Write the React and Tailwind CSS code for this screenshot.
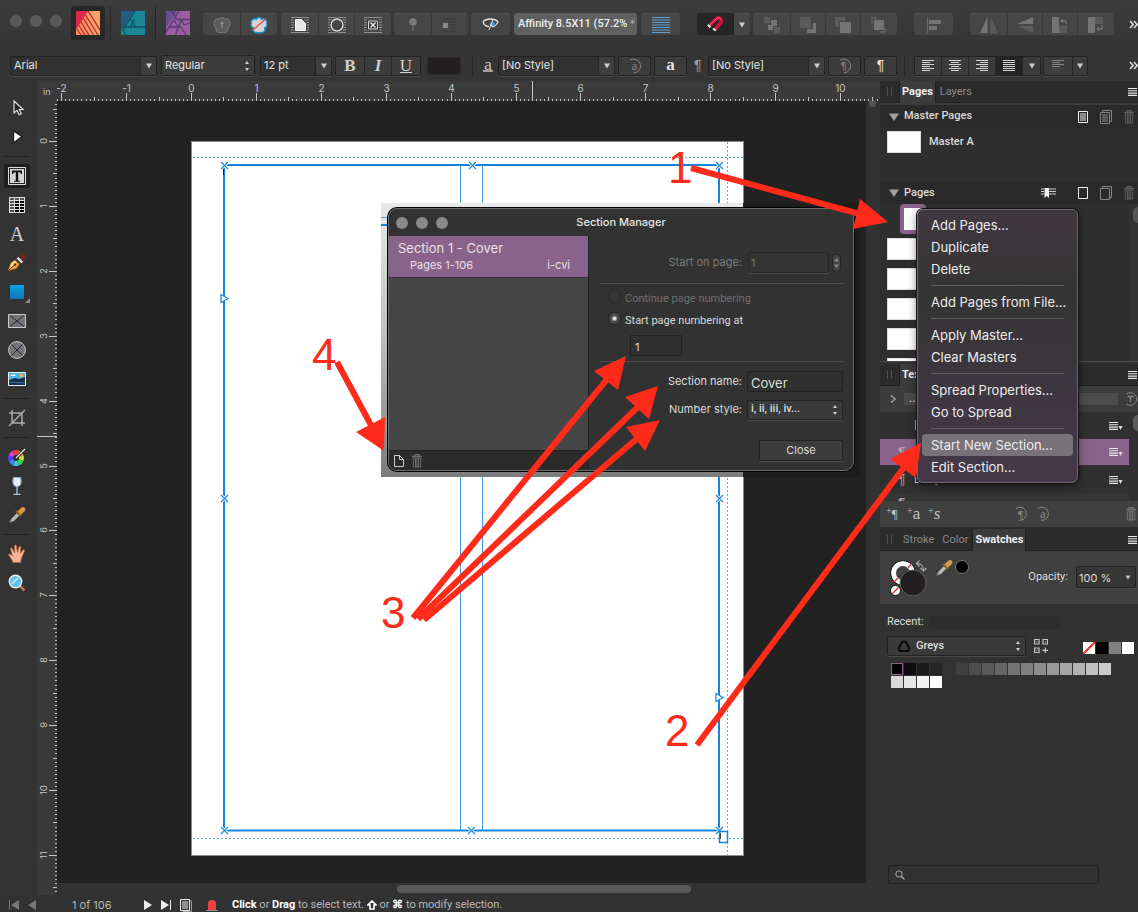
import React from "react";

const btn = "flex items-center justify-center bg-[#464646] border-t border-[#505050]";
const sep = "w-px bg-[#262626] shrink-0";
const boxed = "border border-[#222] shadow-[0_1px_0_#4a4a4a] rounded-[2px]";

function Svg({ w, h, children, className = "" }) {
  return (
    <svg width={w} height={h} viewBox={`0 0 ${w} ${h}`} fill="none" className={`shrink-0 ${className}`} aria-hidden="true">
      {children}
    </svg>
  );
}

const Down = ({ className = "text-[#d0d0d0]" }) => (
  <Svg w={8} h={6} className={className}>
    <path d="M1 .5h6L4 5.5z" fill="currentColor" />
  </Svg>
);

const UpDown = () => (
  <Svg w={6} h={12} className="text-[#d0d0d0]">
    <path d="M1 4h4L3 1zM1 8h4L3 11z" fill="currentColor" />
  </Svg>
);

const Chevrons = () => (
  <Svg w={9} h={9} className="text-[#e4e4e4]">
    <path d="M1 1l3.2 3.5L1 8M5 1l3.2 3.5L5 8" stroke="currentColor" strokeWidth="1.5" />
  </Svg>
);

const Trash = ({ className = "text-[#6a6a6a]" }) => (
  <Svg w={10} h={14} className={className}>
    <path d="M0 2.5h10M3 2V.7h4V2" stroke="currentColor" strokeWidth="1.3" />
    <path d="M1.3 4h7.4v9H1.3zM3.5 4v9M5 4v9M6.6 4v9" stroke="currentColor" strokeWidth="1" />
  </Svg>
);

const MenuLines = () => (
  <Svg w={9} h={8} className="text-[#e6e6e6]">
    <path d="M0 .5h9M0 2.8h9M0 5.1h9M0 7.4h9" stroke="currentColor" strokeWidth="1.1" />
  </Svg>
);

const Dropper = () => (
  <Svg w={18} h={18}>
    <path d="M1.5 16.5l2-4 5.5-5.5 2.5 2.5-5.5 5.5z" fill="#b9bcbc" stroke="#666" strokeWidth=".6" />
    <path d="M8 5l5 5" stroke="#8a5a1e" strokeWidth="2.4" />
    <path d="M9.5 5.5L13 2c1.5-1.5 3-1 3.8-.2s1 2.200-.5 3.700L12.600 9z" fill="#d99a45" />
  </Svg>
);

function Group({ items, className = "" }) {
  return (
    <div className={`flex h-[22px] gap-px rounded-[3px] overflow-hidden ${className}`}>
      {items.map(([label, w, icon]) => (
        <button key={label} aria-label={label} className={`${btn} ${w}`}>
          {icon}
        </button>
      ))}
    </div>
  );
}

const wrapLines = <path d="M0 1.500h18M0 4h18M0 6.500h18M0 9h18M0 11.500h18M0 14h18M0 16.500h18" stroke="#8f8f8f" />;
const flower = "M8.300 3.200a3.100 3.100 0 0 1 5.400 0 3.600 3.600 0 0 1 5 4.300 3.600 3.600 0 0 1-2 4.500 3.400 3.400 0 0 1-4.200 4.500 3.600 3.600 0 0 1-3 0A3.400 3.400 0 0 1 5.300 12a3.600 3.600 0 0 1-2-4.500 3.600 3.600 0 0 1 5-4.300z";

function TopBar() {
  return (
    <header className="flex h-[47px] shrink-0 items-start bg-gradient-to-b from-[#3d3d3d] to-[#353535] overflow-hidden">
      <div className="flex gap-2 pl-[10px] pt-[15px] w-[71px] shrink-0">
        {["Close window", "Minimise window", "Zoom window"].map((n) => (
          <button key={n} aria-label={n} className="size-3 rounded-full bg-[#595959]" />
        ))}
      </div>
      <div className="flex pt-[6px] h-10 items-stretch shrink-0">
        <button aria-label="Publisher" className="flex w-[34px] items-center justify-center rounded-[4px] bg-[#282828]">
          <Svg w={24} h={24}>
            <path d="M0 0h24v24H0z" fill="#ffa066" />
            <path d="M0 20L12 0v24H0z" fill="#ff9158" />
            <path d="M1 18l4 6M3 14.500l6 9.500M5 11l8 13M7.500 7.500L17.500 24M9.500 4L22 24M12 0l12 19" stroke="#b02a3a" strokeWidth="1.300" />
            <path d="M0 0h12L0 19z" fill="#dc2850" />
          </Svg>
        </button>
        <span className={`${sep} ml-[5px]`} />
        <button aria-label="Designer" className="flex w-11 items-center justify-center">
          <Svg w={24} h={24}>
            <path d="M0 0h24v24H0z" fill="#1c8795" />
            <path d="M0 0h13L0 20z" fill="#1f5c82" />
            <path d="M14 0L2 19l3 5M9.500 8l5 8M14 8l-5 8M2 16h22" stroke="#11506a" strokeWidth="1.300" />
          </Svg>
        </button>
        <span className={sep} />
        <button aria-label="Photo" className="flex w-11 items-center justify-center">
          <Svg w={24} h={24}>
            <path d="M0 0h24v24H0z" fill="#9a5ea0" />
            <path d="M0 0h11L0 17z" fill="#6a4c94" />
            <path d="M13 0L0 21M6 0l5 8.500h13M15.500 8.500l-6 15M3 16h12M8 9l4 7M15 16l5 8M15 9l3 5M24 12l-6 2" stroke="#573a78" strokeWidth="1.300" />
          </Svg>
        </button>
      </div>
      <div className="flex items-center pt-[13px] pl-[3px] shrink-0">
        <Group
          items={[
            ["Upload", "w-[37px]", <Svg w={22} h={18}><path d={flower} fill="#5c5c5c" stroke="#7c7c7c" /><path d="M11 4.500l3.200 4H12V13h-2V8.500H7.800z" fill="#8c8c8c" stroke="#444" strokeWidth=".5" /></Svg>],
            ["Clip", "w-9", <Svg w={22} h={18}><path d={flower} fill="#d0d4d8" stroke="#1d8fd0" strokeWidth="1.500" /><path d="M5 14L17 3.500" stroke="#ff4a3c" strokeWidth="1.500" /></Svg>],
          ]}
        />
        <Group
          className="ml-1"
          items={[
            ["Wrap page", "w-[37px]", <Svg w={18} h={18}>{wrapLines}<path d="M3 2h8l5 5v9H3z" fill="#444" /><path d="M4.500 3.500h6l4 4v7h-10z" fill="#e6e6e6" stroke="#fff" /></Svg>],
            ["Wrap circle", "w-[35px]", <Svg w={18} h={18}>{wrapLines}<circle cx="9" cy="9" r="7" fill="#464646" stroke="#333" /><circle cx="9" cy="9" r="6" stroke="#ddd" strokeWidth="1.400" /></Svg>],
            ["Wrap box", "w-9", <Svg w={18} h={18}>{wrapLines}<path d="M3 3.500h12v11H3z" fill="#333" /><path d="M4.500 5h9v8h-9z" stroke="#ddd" /><path d="M6.500 6.500l5 5M11.500 6.500l-5 5" stroke="#eee" strokeWidth="1.400" /></Svg>],
          ]}
        />
        <Group
          className="ml-[3px]"
          items={[
            ["Pin", "w-[37px]", <Svg w={10} h={14}><circle cx="5" cy="4" r="3.700" fill="#7c7c7c" /><path d="M5 7v6" stroke="#7c7c7c" /></Svg>],
            ["Inline", "w-9", <Svg w={16} h={14}><path d="M0 1h14M8 4h6M8 7h8M8 10h6M0 13h14" stroke="#3b3b3b" /><path d="M1 5h5v5H1z" fill="#8a8a8a" /></Svg>],
          ]}
        />
        <Group
          className="ml-[3px]"
          items={[["Preview", "w-[39px]", <Svg w={17} h={13}><path d="M1 4c3-4 12-4 15 0-2 3.500-4 4.500-5 4.500S9 7 9 5.500" stroke="#e2e2e2" strokeWidth="1.300" /><path d="M1 4c1 3 3 4.500 6 4.500" stroke="#e2e2e2" strokeWidth="1.300" /><path d="M11 3.500a2.600 2.600 0 0 1 0 5L9 5z" fill="#25a0e0" /><path d="M11 1L7 12" stroke="#e2e2e2" /></Svg>]]}
        />
        <button className="ml-1 flex h-[22px] w-[123px] items-center justify-between rounded-[3px] bg-[#606060] px-1 font-[Roboto,sans-serif] text-[11px] font-medium text-[#efefef] whitespace-nowrap">
          <span>Affinity 8.5X11 (57.2%</span>
          <span className="text-[#b4b4b4]">＊</span>
        </button>
        <Group
          className="ml-1"
          items={[["Baseline grid", "w-[39px]", <Svg w={18} h={16}><path d="M0 .5h18M0 3h18M0 5.500h18M0 8h18M0 10.500h18M0 13h18M0 15.500h18" stroke="#5a9fd4" /></Svg>]]}
        />
        <div className="ml-[17px] flex h-[22px] overflow-hidden rounded-[3px]">
          <button aria-label="Snapping" className="flex w-[37px] items-center justify-center bg-[#262626]">
            <Svg w={20} h={18}>
              <path d="M3 11l7-7c3-3 7 1 4.500 4l-6 7" stroke="#d3133b" strokeWidth="3.600" />
              <path d="M3.500 10.500L10 4c2-2 4.500-1 5 .5" stroke="#ff5a72" strokeWidth="1" />
              <path d="M1.800 9.800l2.600 2.600M7 13.500l2.800 2.200" stroke="#d8d8d8" strokeWidth="2.200" />
            </Svg>
          </button>
          <button aria-label="Snapping options" className={`${btn} w-4`}><Down /></button>
        </div>
        <Group
          className="ml-[3px]"
          items={[
            ["Move to back", "w-[37px]", <Svg w={18} h={16}><path d="M1 0h6v6H1zM11 10h6v6h-6z" fill="#5b5b5b" /><path d="M8 3h6v6h-4v4H5V8h3z" fill="#747474" /></Svg>],
            ["Move back one", "w-[34px]", <Svg w={18} h={16}><path d="M8 16v-4h6V6h3v10z" fill="#747474" /><path d="M1 0h11v11H1z" fill="#5b5b5b" /></Svg>],
            ["Move forward one", "w-[34px]", <Svg w={18} h={16}><path d="M1 0h10v4H5v6H1z" fill="#5b5b5b" /><path d="M6 5h11v11H6z" fill="#747474" /></Svg>],
            ["Move to front", "w-9", <Svg w={18} h={16}><path d="M1 0h6v2H3v5H1zM16 11v5h-6v-2h4v-3z" fill="#5b5b5b" /><path d="M4 3h10v10H4z" fill="#747474" /></Svg>],
          ]}
        />
        <Group
          className="ml-[17px]"
          items={[["Align", "w-[39px]", <Svg w={16} h={16}><path d="M1.500 0v16" stroke="#6a6a6a" /><path d="M3 3h12v4H3zM3 9h8v4H3z" fill="#747474" /></Svg>]]}
        />
        <Group
          className="ml-[17px]"
          items={[
            ["Flip horizontal", "w-[37px]", <Svg w={20} h={18}><path d="M8.500 1v16H1z" fill="#747474" /><path d="M11.500 1v16H19z" fill="#5b5b5b" /></Svg>],
            ["Flip vertical", "w-[34px]", <Svg w={18} h={18}><path d="M17 1v7H1z" fill="#747474" /><path d="M17 17v-7H1z" fill="#5b5b5b" /></Svg>],
            ["Rotate left", "w-[34px]", <Svg w={18} h={16}><path d="M1 0h7v16H1z" fill="#747474" /><path d="M8 9h8v7H8z" fill="#5b5b5b" /><path d="M15 7V4h-5M12 2l-2 2 2 2" stroke="#858585" /></Svg>],
            ["Rotate right", "w-9", <Svg w={18} h={16}><path d="M1 0h7v16H1z" fill="#747474" /><path d="M8 0h8v7H8z" fill="#5b5b5b" /><path d="M15 8v4h-5M12 10l-2 2 2 2" stroke="#858585" /></Svg>],
          ]}
        />
      </div>
      <button aria-label="More tools" className="ml-auto mt-5"><Chevrons /></button>
    </header>
  );
}

function Combo({ label, value, field, className = "" }) {
  return (
    <div className={`flex h-5 overflow-hidden bg-[#313131] ${boxed} ${className}`}>
      <input aria-label={label} defaultValue={value} className={`min-w-0 bg-transparent pl-[3px] text-[11px] text-[#e6e6e6] outline-none ${field}`} />
      <button aria-label={`${label} list`} className="flex w-4 items-center justify-center border-l border-[#262626] bg-[#3e3e3e]">
        <Down />
      </button>
    </div>
  );
}

const alignPaths = [
  "M0 .5h12M0 2.500h8M0 4.500h12M0 6.500h8M0 8.500h12M0 10.500h8",
  "M0 .5h12M2 2.500h8M0 4.500h12M2 6.500h8M0 8.500h12M2 10.500h8",
  "M0 .5h12M4 2.500h8M0 4.500h12M4 6.500h8M0 8.500h12M4 10.500h8",
  "M0 .5h12M0 2.500h12M0 4.500h12M0 6.500h12M0 8.500h12M0 10.500h12",
];

function ContextBar() {
  const serif = "font-['Liberation_Serif',serif]";
  const cell = "flex items-center justify-center bg-[#3c3c3c]";
  return (
    <div className="flex h-[34px] shrink-0 items-center bg-[#353535] pl-[10px] pt-[3px] overflow-hidden text-[11px] text-[#e6e6e6]">
      <Combo label="Font" value="Arial" field="w-[129px]" />
      <div className={`ml-1 flex h-[21px] w-[94px] shrink-0 items-center bg-[#3c3c3c] pr-[4px] ${boxed}`}>
        <select aria-label="Font style" className="min-w-0 flex-1 appearance-none bg-transparent pl-[3px] outline-none">
          <option>Regular</option>
        </select>
        <UpDown />
      </div>
      <Combo label="Font size" value="12 pt" field="w-[54px]" className="ml-[5px]" />
      <div className={`ml-[3px] flex h-5 shrink-0 gap-px bg-[#262626] text-[17px] text-[#d0d0d0] ${boxed} ${serif}`}>
        <button className={`${cell} w-7 font-bold`}>B</button>
        <button className={`${cell} w-[26px] font-bold italic`}>I</button>
        <button className={`${cell} w-7`}><span className="border-b border-[#d0d0d0] leading-[13px]">U</span></button>
      </div>
      <button aria-label="Text colour" className="ml-[6px] h-[18px] w-[34px] shrink-0 border border-[#2c2c2c] bg-[#231f20]" />
      <span className={`${sep} ml-[11px] h-5`} />
      <span className={`ml-[10px] border-b-2 border-[#a0a0a0] text-[17px] leading-[11px] text-[#c8c8c8] w-[10px] text-center ${serif}`}>a</span>
      <Combo label="Character style" value="[No Style]" field="w-[99px]" className="ml-[5px]" />
      <button aria-label="Update character style" className={`${cell} ml-[3px] h-5 w-[33px] shrink-0 ${boxed} text-[#858585]`}>
        <Svg w={18} h={16}><path d="M4 2a7 7 0 1 1 4 13" stroke="currentColor" /><text x="5.500" y="12" fontSize="13" fontFamily="Liberation Serif" fill="currentColor">a</text></Svg>
      </button>
      <button aria-label="Character panel" className={`${cell} ml-[3px] h-5 w-[33px] shrink-0 ${boxed} text-[17px] font-bold leading-none pb-[2px] ${serif}`}>a</button>
      <span className="ml-[7px] w-[9px] text-[14px] text-[#a0a0a0] font-['Liberation_Sans',sans-serif]">¶</span>
      <Combo label="Paragraph style" value="[No Style]" field="w-[99px]" className="ml-[5px]" />
      <button aria-label="Update paragraph style" className={`${cell} ml-[3px] h-5 w-[33px] shrink-0 ${boxed} text-[#858585]`}>
        <Svg w={18} h={16}><path d="M4 2a7 7 0 1 1 4 13" stroke="currentColor" /><text x="5" y="12" fontSize="11" fontFamily="Liberation Sans" fill="currentColor">¶</text></Svg>
      </button>
      <button aria-label="Paragraph panel" className={`${cell} ml-[3px] h-5 w-[33px] shrink-0 ${boxed} text-[14px] font-['Liberation_Sans',sans-serif]`}>¶</button>
      <span className={`${sep} ml-[7px] h-5`} />
      <div className={`ml-[9px] flex h-5 shrink-0 gap-px bg-[#262626] ${boxed}`}>
        {["Align left", "Align centre", "Align right", "Justify"].map((n, i) => (
          <button key={n} aria-label={n} className={`flex w-[26px] items-center justify-center ${i === 3 ? "bg-[#242424]" : "bg-[#3c3c3c]"}`}>
            <Svg w={12} h={11}><path d={alignPaths[i]} stroke="#d6d6d6" /></Svg>
          </button>
        ))}
        <button aria-label="Justify options" className={`${cell} w-[17px]`}><Down /></button>
      </div>
      <div className={`ml-[2px] flex h-5 shrink-0 gap-px bg-[#262626] ${boxed}`}>
        <button aria-label="Vertical align" className={`${cell} w-7`}>
          <Svg w={12} h={11}><path d="M0 .5h12M0 2.500h8M0 4.500h12M0 6.500h8" stroke="#858585" /><path d="M0 8.500h12M0 10.500h8" stroke="#4a4a4a" /></Svg>
        </button>
        <button aria-label="Vertical align options" className={`${cell} w-[14px]`}><Down /></button>
      </div>
      <button aria-label="More options" className="ml-auto"><Chevrons /></button>
    </div>
  );
}

const wheel = ["#f33", "#f93", "#cd3", "#3d5", "#3cc", "#38f", "#63f", "#d4c"];
const tools = [
  ["Move", <Svg w={22} h={22}><path d="M8 4v12l3-2.600 2 4.300 2.300-1-2-4.200H17z" fill="#222" stroke="#ddd" strokeWidth="1.200" /></Svg>],
  ["Node", <Svg w={22} h={22}><path d="M7.500 5v12l8.500-6.500z" fill="#fff" stroke="#1c1c1c" strokeWidth="1.300" /></Svg>],
  null,
  ["Frame text", <Svg w={18} h={18}><path d="M.5.5h17v17H.5z" fill="#222" stroke="#ddd" /><path d="M2 2h14v14H2z" fill="#d4d4d4" /><path d="M4 3.500h10V7h-1l-1-1.800h-1.800V13.500l1.800.4v.8H6v-.8l1.800-.4V5.200H6L5 7H4z" fill="#111" /></Svg>],
  ["Table", <Svg w={16} h={16}><path d="M0 0h16v16H0z" fill="#ddd" /><path d="M1 1h4v2H1zM6 1h4v2H6zM11 1h4v2h-4z" fill="#555" /><path d="M1 4h4v2H1zM1 7h4v2H1zM1 10h4v2H1zM1 13h4v2H1z" fill="#555" /><path d="M6 4h4v2H6zM11 4h4v2h-4zM6 7h4v2H6zM11 7h4v2h-4zM6 10h4v2H6zM11 10h4v2h-4zM6 13h4v2H6zM11 13h4v2h-4z" fill="#000" /></Svg>],
  ["Artistic text", <span className="font-['Liberation_Serif',serif] text-[20px] leading-none text-[#d0d0d0]">A</span>],
  ["Pen", <Svg w={20} h={20}><path d="M1 18l2.500-8 4.500-3 4.500 4-3 4.500z" fill="#f0a84c" stroke="#8a4a10" strokeWidth=".6" /><path d="M2 17.500l3-8 3-2 1.500 1.500z" fill="#ffe2a0" /><path d="M1.500 17.500L8 11.500" stroke="#613000" /><circle cx="8" cy="11.500" r="1.200" fill="#613000" /><path d="M9.500 5.500l5 5 1.500-2-4.500-4.500z" fill="#ddd" /><path d="M13 3l4-2 2 1-.5 3-3 3z" fill="#7b2415" /></Svg>],
  ["Rectangle", <Svg w={26} h={24}><defs><linearGradient id="bl" x1="0" y1="0" x2="0" y2="1"><stop stopColor="#0ba0e0" /><stop offset="1" stopColor="#0878b8" /></linearGradient></defs><path d="M6 5h14v14H6z" fill="url(#bl)" /><path d="M26 18v5h-5z" fill="#8a8a8a" /></Svg>],
  ["Picture frame", <Svg w={18} h={14}><path d="M.5.5h17v13H.5z" fill="#747474" stroke="#c8c8c8" /><path d="M2 1.500l14 11M16 1.500l-14 11" stroke="#1c2740" /></Svg>],
  ["Ellipse frame", <Svg w={18} h={18}><circle cx="9" cy="9" r="8.400" fill="#747474" stroke="#c8c8c8" /><path d="M3.500 3.500l11 11M14.500 3.500l-11 11" stroke="#1c2740" /></Svg>],
  ["Place image", <Svg w={18} h={14}><path d="M.5.5h17v13H.5z" fill="#4db4e8" stroke="#eee" /><path d="M1 8l6-2 4 1 6-2v8H1z" fill="#17304a" /><path d="M2 4h6l-2-2-2 1z" fill="#fff" /><circle cx="13.500" cy="3.500" r="1.800" fill="#ffb43c" /><path d="M1 10l16 1" stroke="#3a78a0" /></Svg>],
  null,
  ["Crop", <Svg w={18} h={18}><path d="M4 1v13h13M1 4h13v13M1 17L17 1" stroke="#aaa" strokeWidth="1.500" /></Svg>],
  null,
  ["Fill", <Svg w={20} h={18}>{wheel.map((c, i) => <path key={c} d="M9 10L6 2.600A8 8 0 0 1 12 2.600z" fill={c} transform={`rotate(${i * 45} 9 10)`} />)}<circle cx="9" cy="10" r="3" fill="#333" /><path d="M9 10l9-9" stroke="#222" strokeWidth="3" /><path d="M9 10l9-9" stroke="#eee" strokeWidth="1.300" /></Svg>],
  ["Transparency", <Svg w={12} h={18}><path d="M2.500.5h7c1 4 1 9-3.500 9s-4.500-5-3.500-9z" fill="#e6ecf8" stroke="#9cb0cc" /><path d="M6 9.500V17M2.500 17.300h7" stroke="#b4c8e4" strokeWidth="1.300" /></Svg>],
  ["Colour picker", <Dropper />],
  null,
  ["View", <Svg w={18} h={20}><path d="M5 18.500c-1-3-3.500-6-4.500-8 1-1 2.500 0 4 1.500L2.500 5c.2-1.500 1.500-1.300 2 0L6.700 9 6.500 2c.3-1.400 1.700-1.300 2 0L9.500 8.500 11 3c.5-1.200 1.800-1 1.800.3L12.300 9.500 15 6c.9-.8 2-.2 1.600 1L13.500 14l-1 4.500z" fill="#f7b594" stroke="#a8603c" strokeWidth=".7" /></Svg>],
  ["Zoom", <Svg w={18} h={18}><path d="M11.500 11.500l5 5" stroke="#e07b3c" strokeWidth="2.400" /><circle cx="7.500" cy="7.500" r="6.200" fill="#5cc0f0" stroke="#eee" strokeWidth="1.400" /><path d="M3.500 8.500l5.500-5 1.500 1-6 6z" fill="#bfe8fc" /></Svg>],
];

function Tools() {
  return (
    <nav className="flex w-[37px] shrink-0 flex-col bg-[#333] pt-3 pr-[3px]">
      {tools.map((t, i) =>
        t ? (
          <div key={i} className="flex h-[29px] items-center justify-center">
            <button aria-label={t[0]} className={`flex h-6 w-[26px] items-center justify-center rounded-[3px] ${t[0] === "Frame text" ? "bg-[#1f1f1f]" : ""}`}>
              {t[1]}
            </button>
          </div>
        ) : (
          <div key={i} className="flex h-[10px] items-center pl-1"><span className="h-px w-[26px] bg-[#222]" /></div>
        )
      )}
    </nav>
  );
}

const UNIT = 64.9;
function ticks(from, to, zero) {
  const out = [];
  const start = Math.ceil(((from - zero) / UNIT) * 16);
  for (let k = start; zero + (k * UNIT) / 16 < to; k++) {
    out.push({ p: Math.round(zero + (k * UNIT) / 16), len: k % 16 === 0 ? 8 : k % 8 === 0 ? 4 : 2, n: k % 16 === 0 ? k / 16 : null });
  }
  return out;
}

function TopRuler() {
  return (
    <svg className="block h-5 w-[841px] shrink-0" viewBox="37 81 841 20" fill="#c4c4c4">
      <text x="43" y="95" fontSize="9">in</text>
      {ticks(57, 878, 191).map((t) => (
        <g key={t.p}>
          <rect x={t.p} y={101 - t.len} width="1" height={t.len} />
          {t.n !== null && <text x={t.p + 0.5} y="91.500" textAnchor="middle" fontSize="10">{t.n}</text>}
        </g>
      ))}
      <rect x="532" y="81" width="1" height="20" />
    </svg>
  );
}

function SideRuler() {
  return (
    <svg className="block h-[794px] w-5 shrink-0" viewBox="37 101 20 794" fill="#c4c4c4">
      {ticks(101, 893, 141).map((t) => (
        <g key={t.p}>
          <rect x={57 - t.len} y={t.p} width={t.len} height="1" />
          {t.n !== null && <text transform={`translate(47 ${t.p}) rotate(-90)`} textAnchor="middle" fontSize="9">{t.n}</text>}
        </g>
      ))}
      <rect x="37" y="436" width="20" height="1" />
    </svg>
  );
}

function DocumentPage() {
  const marks = [[224, 165], [472, 165], [719, 165], [224, 498], [719, 498], [224, 830], [471, 830], [719, 830]];
  return (
    <svg className="block h-[782px] w-[809px] shrink-0" viewBox="57 101 809 782" fill="none">
      <rect x="191.500" y="141.500" width="552" height="714" fill="#fff" stroke="#8a8a8a" />
      <path d="M193 157.500h550M193 838.500h550M727.500 142v713" stroke="#5aa8e4" strokeDasharray="2 2" />
      <path d="M460.500 166v664M482.500 166v664" stroke="#3f9ae2" />
      <rect x="224" y="165" width="495" height="665.500" stroke="#1682dc" strokeWidth="2" />
      <path d="M223.500 166v9" stroke="#123" />
      {marks.map(([x, y]) => (
        <g key={`${x}-${y}`}>
          <path d={`M${x - 3} ${y - 3}l7 7M${x + 4} ${y - 3}l-7 7`} stroke="#fff" strokeWidth="3" />
          <path d={`M${x - 3} ${y - 3}l7 7M${x + 4} ${y - 3}l-7 7`} stroke="#1f8ae0" strokeWidth="1.200" />
        </g>
      ))}
      <path d="M221 294.500v8l7-4zM716 693.500v8l7-4z" fill="#fff" stroke="#1f8ae0" strokeWidth="1.300" />
      <path d="M719.500 831.500h8v11h-8z" fill="#fff" stroke="#1682dc" strokeWidth="1.500" />
      <path d="M720.500 833v6" stroke="#444" />
    </svg>
  );
}

function SectionManager() {
  const field = "border border-[#232323] bg-[#303030] outline-none";
  return (
    <div className="absolute left-[324px] top-[102px] flex h-[274px] w-[479px]">
      <div className="w-[362px] bg-gradient-to-b from-[#e9e9e9] via-[#bdbdbd] to-[#7c7c7c]">
        <div className="mt-[14px] w-[6px] border-t border-dashed border-[#5a9fd4]" />
        <div className="mt-[6px] h-[2px] w-[6px] bg-[#1682dc]" />
      </div>
      <div className="flex-1 bg-[#1d1d1d]" />
      <section aria-label="Section Manager" className="absolute left-[7px] top-[5px] flex h-[263px] w-[466px] flex-col overflow-hidden rounded-[9px] border border-[#6c6c6c] bg-[#323232] text-[11px] text-[#dcdcdc] shadow-[0_0_0_1px_#000]">
        <div className="relative flex h-[27px] shrink-0 items-center justify-center">
          <div className="absolute left-[7px] flex gap-2">
            {["Close", "Minimise", "Maximise"].map((n) => (
              <button key={n} aria-label={n} className="size-3 rounded-full bg-[#8a8a8a]" />
            ))}
          </div>
          <h2 className="font-medium text-[#e6e6e6]">Section Manager</h2>
        </div>
        <div className="flex flex-1">
          <div className="flex w-[200px] shrink-0 flex-col border-r border-[#222] bg-[#454545]">
            <button className="flex h-[42px] flex-col border-b border-[#333] bg-[#8a638c] px-[9px] pt-[3px] text-left text-[#e8e0e8]">
              <span className="text-[13px] leading-[18px]">Section 1 - Cover</span>
              <span className="flex w-full justify-between pl-3 pr-[9px] leading-[17px]"><span>Pages 1-106</span><span>i-cvi</span></span>
            </button>
            <div className="mt-auto flex h-5 items-center gap-2 border-t border-[#222] bg-[#2b2b2b] px-[5px]">
              <button aria-label="Add section"><Svg w={10} h={12}><path d="M.5.5h5l4 4v7h-9zM5.500.5v4h4" stroke="#ccc" /></Svg></button>
              <button aria-label="Delete section"><Trash /></button>
            </div>
          </div>
          <form className="flex flex-1 flex-col pl-[11px] pr-[10px] pt-4" onSubmit={(e) => e.preventDefault()}>
            <div className="flex h-[21px] items-center justify-end text-[#7c7c7c]">
              <label htmlFor="sop">Start on page:</label>
              <input id="sop" disabled defaultValue="1" className="ml-[6px] h-[21px] w-[81px] rounded-[3px] border border-[#262626] bg-[#333] pl-[2px] shadow-[0_1px_0_#4a4a4a]" />
              <button type="button" aria-label="Step page" disabled className="ml-[3px] mr-[2px] flex h-[18px] w-[9px] items-center justify-center rounded-[4px] border border-[#262626] bg-[#444]">
                <Svg w={5} h={12}><path d="M0 4.500h5L2.500 1zM0 7.500h5L2.500 11z" fill="#8a8a8a" /></Svg>
              </button>
            </div>
            <hr className="mt-[10px] border-[#4c4c4c]" />
            <label className="mt-1 flex h-[22px] items-center gap-1 pl-[8px] font-[Roboto,sans-serif] text-[#707070]">
              <input type="radio" name="numbering" disabled className="mb-[6px] size-[13px] appearance-none rounded-full border border-[#2b2b2b] bg-[#353535]" />
              Continue page numbering
            </label>
            <label className="flex h-[22px] items-center gap-1 pl-[8px] font-[Roboto,sans-serif]">
              <input type="radio" name="numbering" defaultChecked className="mb-[6px] size-[13px] appearance-none rounded-full border border-[#222] bg-[radial-gradient(circle,#eee_1px,#4c4c4c_3px)]" />
              Start page numbering at
            </label>
            <input aria-label="First page number" defaultValue="1" className={`ml-[30px] mt-[3px] h-[21px] w-[52px] pl-1 pt-[2px] ${field}`} />
            <hr className="mt-[5px] border-[#4c4c4c]" />
            <div className="mt-[9px] flex h-[21px] items-center justify-end">
              <label htmlFor="sname">Section name:</label>
              <input id="sname" defaultValue="Cover" className={`ml-[5px] h-[21px] w-24 pl-[3px] pt-[2px] text-[13px] ${field}`} />
            </div>
            <div className="mt-[7px] flex h-[21px] items-center justify-end">
              <label htmlFor="nstyle">Number style:</label>
              <div className={`ml-[5px] flex h-5 w-24 items-center bg-[#3a3a3a] pr-[4px] ${boxed}`}>
                <select id="nstyle" className="min-w-0 flex-1 appearance-none bg-transparent pl-[3px] font-[Roboto,sans-serif] font-medium outline-none"><option>i, ii, iii, iv...</option></select>
                <UpDown />
              </div>
            </div>
            <button type="button" className={`mt-5 h-[21px] w-[84px] self-end bg-[#3c3c3c] ${boxed}`}>Close</button>
          </form>
        </div>
      </section>
    </div>
  );
}

function Workspace() {
  return (
    <main className="flex min-w-0 flex-1 flex-col overflow-hidden">
      <div className="h-5 shrink-0 overflow-hidden bg-[#3a3a3a]"><TopRuler /></div>
      <div className="flex min-h-0 flex-1">
        <div className="w-5 shrink-0 overflow-hidden bg-[#3a3a3a]"><SideRuler /></div>
        <div className="flex min-w-0 flex-1 flex-col">
          <div className="flex min-h-0 flex-1">
            <div className="relative min-w-0 flex-1 overflow-hidden bg-[#222]">
              <DocumentPage />
              <SectionManager />
            </div>
            <div className="w-[14px] shrink-0 bg-[#323232] pl-[3px]"><div className="h-[6px] w-[7px] rounded-b-full bg-[#555]" /></div>
          </div>
          <div className="h-3 shrink-0 bg-[#323232] pl-[340px] pt-[2px]"><div className="h-2 w-[294px] rounded-full bg-[#595959]" /></div>
        </div>
      </div>
    </main>
  );
}

function TabBar({ tabs, active }) {
  return (
    <div className="flex h-[22px] shrink-0 items-stretch border-b border-[#222] bg-[#2b2b2b] font-[Roboto,sans-serif] text-[11px]">
      <span className="ml-[7px] my-[6px] w-[5px] border-x border-[#505050]" />
      <div className="ml-[7px] flex items-stretch">
        {tabs.map((t) => (
          <button key={t} className={t === active ? "-mb-px border-x border-[#1f1f1f] bg-[#3c3c3c] px-[2px] font-bold text-[#f0f0f0]" : "px-1 pt-px text-[#8c8c8c]"}>{t}</button>
        ))}
      </div>
      <button aria-label={`${active} panel menu`} className="ml-auto pr-px"><MenuLines /></button>
    </div>
  );
}

const Tri = () => <Svg w={10} h={8}><path d="M0 .5h10L5 8z" fill="#a0a0a0" /></Svg>;

const menu = [["Add Pages...", "Duplicate", "Delete"], ["Add Pages from File..."], ["Apply Master...", "Clear Masters"], ["Spread Properties...", "Go to Spread"], ["Start New Section...", "Edit Section..."]];

function ContextMenu() {
  return (
    <div role="menu" className="absolute left-[37px] top-32 w-[161px] rounded-[6px] border border-[#6a6a6a] bg-gradient-to-b from-[#403840] via-[#353534] via-30% to-[#45384a] p-1 text-[13px] text-[#ececec] shadow-[0_0_0_1px_#111,0_3px_10px_#0008]">
      {menu.map((g, i) => (
        <div key={i}>
          {i > 0 && <div className="flex h-[11px] items-center px-[9px]"><span className="h-px w-full bg-[#5e5c5e]" /></div>}
          {g.map((m) => (
            <button key={m} role="menuitem" className={`block h-[22px] w-full whitespace-nowrap rounded-[4px] pl-[9px] text-left leading-[22px] ${m === "Start New Section..." ? "bg-[#777277]" : ""}`}>{m}</button>
          ))}
        </div>
      ))}
    </div>
  );
}

const greys = ["#000", "#0d0d0d", "#1a1a1a", "#262626", "#333", "#404040", "#4d4d4d", "#595959", "#666", "#737373", "#808080", "#8c8c8c", "#999", "#a6a6a6", "#b3b3b3", "#bfbfbf", "#ccc", "#d9d9d9", "#e6e6e6", "#f2f2f2", "#fff"];

const styleRows = ["[No Style]", "Base", "Body"];

function Panels() {
  return (
    <aside className="relative flex w-[258px] shrink-0 flex-col bg-[#323232] text-[11px] text-[#dcdcdc]">
      <TabBar tabs={["Pages", "Layers"]} active="Pages" />
      <div className="flex h-[25px] shrink-0 items-center border-t-2 border-[#3c3c3c] bg-[#2a2a2a] pl-[9px] pr-1">
        <Tri />
        <h3 className="ml-[5px] font-[Roboto,sans-serif] font-medium">Master Pages</h3>
        <div className="ml-auto flex items-center gap-3">
          <button aria-label="Add master"><Svg w={10} h={12}><path d="M.5.5h9v11h-9z" stroke="#eee" /><path d="M2 3h6M2 5h6M2 7h6M2 9h6" stroke="#eee" /></Svg></button>
          <button aria-label="Duplicate master"><Svg w={12} h={14}><path d="M2.500 2V.5h9v11H10M.5 2.500h9v11h-9zM2 5h6M2 7h6M2 9h6M2 11h6" stroke="#858585" /></Svg></button>
          <button aria-label="Delete master"><Trash className="text-[#5c5c5c]" /></button>
        </div>
      </div>
      <div className="flex h-[54px] shrink-0 items-start bg-[#2e2e2e] pl-[7px] pt-[3px]">
        <div className="h-[22px] w-[34px] border border-[#ddd] bg-white" />
        <span className="ml-2 leading-[22px] font-[Roboto,sans-serif] font-medium">Master A</span>
      </div>
      <div className="flex h-[22px] shrink-0 items-center bg-[#2a2a2a] pl-[9px] pr-1">
        <Tri />
        <h3 className="ml-[5px] font-[Roboto,sans-serif] font-medium">Pages</h3>
        <div className="ml-auto flex items-center gap-3">
          <button aria-label="Sections" className="mr-[10px]"><Svg w={15} h={10}><path d="M0 1h3M0 3.500h3M0 6h3M8 1h7M8 3.500h7M8 6h7" stroke="#ccc" /><path d="M3.500 0H8v10L5.700 8 3.500 10z" fill="#eee" /></Svg></button>
          <button aria-label="Add page"><Svg w={10} h={12}><path d="M.5.5h9v11h-9z" stroke="#eee" /></Svg></button>
          <button aria-label="Duplicate page"><Svg w={12} h={14}><path d="M2.500 2V.5h9v11H10M.5 2.500h9v11h-9z" stroke="#858585" /></Svg></button>
          <button aria-label="Delete page"><Trash className="text-[#5c5c5c]" /></button>
        </div>
      </div>
      <div className="flex h-[157px] shrink-0 bg-[#2e2e2e]">
        <div className="flex-1 overflow-hidden pl-[7px]">
          <div className="ml-[13px] h-[30px] w-[26px] rounded-[4px] bg-[#8a638c] p-1"><div className="h-full bg-white" /></div>
          <div className="mt-1 flex flex-col gap-2">
            {[1, 2, 3, 4, 5].map((n) => <div key={n} className="h-[22px] w-[34px] shrink-0 border border-[#ddd] bg-white" />)}
          </div>
        </div>
        <div className="w-[9px] bg-[#323232] pl-1 pt-[3px]"><div className="h-4 w-[5px] rounded-l-full bg-[#555]" /></div>
      </div>
      <div className="h-[3px] shrink-0 border-t border-[#484848]" />
      <TabBar tabs={["Text Styles"]} active="Text Styles" />
      <div className="flex h-[26px] shrink-0 items-center bg-[#3c3c3c] pl-[10px]">
        <Svg w={7} h={8}><path d="M1 .5L5 4 1 7.500" stroke="#a0a0a0" strokeWidth="1.500" /></Svg>
        <span className="ml-[7px] h-3 w-[215px] bg-[#4c4c4c] pl-[5px] leading-[10px]">...</span>
        <span className="ml-[6px]"><Svg w={14} h={14}><path d="M2.500 2a6.300 6.300 0 1 1 0 10" stroke="#858585" /><path d="M3.500 4.500h6M6.500 4.500V10" stroke="#858585" strokeWidth="1.500" /></Svg></span>
      </div>
      <div className="flex h-[89px] shrink-0">
        <ul className="flex-1 overflow-hidden">
          {styleRows.map((s, i) => (
            <li key={s} className={`flex items-center pl-[18px] pr-[6px] ${i === 1 ? "mb-px h-[26px] bg-[#8a638c]" : "h-[27px] bg-[#303030]"}`}>
              <span className="w-4 text-[14px] text-[#a8a8a8] font-['Liberation_Sans',sans-serif]">{i > 0 ? "¶" : ""}</span>
              <span>{s}</span>
              <button aria-label={`${s} options`} className="ml-auto flex items-end"><MenuLines /><Svg w={5} h={4}><path d="M.5 0h4L2.500 4z" fill="#ddd" /></Svg></button>
            </li>
          ))}
          <li className="flex h-[27px] bg-[#363636] pl-[18px] text-[14px] text-[#a8a8a8] font-['Liberation_Sans',sans-serif]">¶</li>
        </ul>
        <div className="w-[9px] bg-[#303030] pl-1 pt-[3px]"><div className="h-4 w-[5px] rounded-l-full bg-[#5c5c5c]" /></div>
      </div>
      <div className="flex h-[26px] shrink-0 items-center bg-[#404040] pl-[6px] pr-[2px] text-[#c4c4c4] font-['Liberation_Serif',serif]">
        <button className="flex w-[21px] items-center text-[13px]"><span className="pb-[7px] text-[10px]">+</span>¶</button>
        <button className="flex w-[21px] items-center text-[17px]"><span className="pb-[7px] text-[10px]">+</span>a</button>
        <button className="flex w-[21px] items-center text-[17px] italic"><span className="pb-[7px] text-[10px] not-italic">+</span>s</button>
        <button aria-label="Paragraph update" className="ml-[64px] text-[#8c8c8c]"><Svg w={16} h={16}><path d="M3 2.500a6.500 6.500 0 1 1 3 11.700" stroke="currentColor" /><text x="5" y="12" fontSize="11" fill="currentColor">¶</text></Svg></button>
        <button aria-label="Character update" className="ml-[6px] text-[#8c8c8c]"><Svg w={16} h={16}><path d="M3 2.500a6.500 6.500 0 1 1 3 11.700" stroke="currentColor" /><text x="5" y="11.500" fontSize="13" fill="currentColor">a</text></Svg></button>
        <button aria-label="Delete style" className="ml-auto"><Trash className="text-[#707070]" /></button>
      </div>
      <div className="h-[2px] shrink-0 bg-[#2b2b2b]" />
      <TabBar tabs={["Stroke", "Color", "Swatches"]} active="Swatches" />
      <div className="flex h-[53px] shrink-0 items-start bg-[#404040] pl-[9px] pt-2">
        <Svg w={42} h={40}>
          <circle cx="14" cy="14" r="9.500" stroke="#fff" strokeWidth="5" />
          <circle cx="14" cy="14" r="12.500" stroke="#222" />
          <path d="M19 8.500l4-4M5 23l4-4" stroke="#e33" strokeWidth="1.500" />
          <circle cx="24" cy="24" r="13" fill="#231f20" stroke="#606060" />
          <circle cx="6.500" cy="31.500" r="5" fill="#fff" stroke="#111" /><path d="M3.500 34.500l6-6" stroke="#e33" strokeWidth="1.500" />
          <path d="M28 4.500c4.500 0 6.500 2.500 6.500 7M30.500 1.500l-3 3 3 3M31.500 9l3 3 3-3" stroke="#a8a8a8" strokeWidth="1.200" />
        </Svg>
        <button aria-label="Colour picker" className="ml-1"><Dropper /></button>
        <button aria-label="Picked colour" className="ml-[2px] mt-px size-[14px] rounded-full border border-[#777] bg-black" />
        <label htmlFor="opacity" className="ml-auto mt-[10px] font-[Roboto,sans-serif]">Opacity:</label>
        <div className={`ml-2 mr-[2px] mt-[7px] flex h-[22px] w-[60px] items-center bg-[#363636] pr-1 ${boxed}`}>
          <input id="opacity" defaultValue="100 %" className="w-12 min-w-0 flex-1 bg-transparent pl-[2px] pt-[2px] outline-none" />
          <Svg w={6} h={5}><path d="M.5.5h5L3 4.500z" fill="#ccc" /></Svg>
        </div>
      </div>
      <div className="flex h-[22px] shrink-0 mt-[7px] items-center pl-[7px]">
        <span className="font-[Roboto,sans-serif]">Recent:</span><span className="ml-[5px] h-[13px] w-[131px] bg-[#2d2d2d]" />
      </div>
      <div className="mt-[3px] flex h-5 shrink-0 items-center pl-[7px] pr-1">
        <div className={`flex h-5 w-[139px] items-center bg-[#3a3a3a] pl-[9px] pr-1 ${boxed}`}>
          <Svg w={14} h={12}><path d="M5.500 1.500h3l4 6.500-1.500 3H3L1.500 8z" stroke="#0a0a0a" strokeWidth="2.200" /></Svg>
          <select aria-label="Palette" className="ml-[5px] flex-1 appearance-none bg-transparent font-[Roboto,sans-serif] font-medium outline-none"><option>Greys</option></select>
          <UpDown />
        </div>
        <button aria-label="Palette view" className="ml-[8px]"><Svg w={14} h={14}><path d="M.5.5h4.500v4.500H.5zM9 .5h4.500v4.500H9zM.5 9h4.500v4.500H.5zM2.300 2.800h1M10.800 2.800h1M2.300 11.300h1M11.300 8.500v5.500M8.500 11.300h5.500" stroke="#c8c8c8" strokeWidth="1.200" /></Svg></button>
        <div className="ml-auto mt-[3px] flex gap-px">
          <button aria-label="No fill" className="size-3 bg-[linear-gradient(135deg,#fff_45%,#f33_45%,#f33_55%,#fff_55%)]" />
          <button aria-label="Black" className="size-3 bg-black" />
          <button aria-label="Grey" className="size-3 bg-[#808080]" />
          <button aria-label="White" className="size-3 bg-white" />
        </div>
      </div>
      <div className="ml-[11px] mt-[7px] flex w-[230px] shrink-0 flex-wrap gap-px">
        {greys.map((g, i) => <button key={g} aria-label={g} style={{ background: g }} className={`size-3 ${i === 0 ? "border border-[#8a638c]" : ""}`} />)}
      </div>
      <div className={`mx-2 mb-[11px] mt-auto flex h-[19px] w-[211px] shrink-0 items-center border border-[#222] rounded-[2px] pl-[6px]`}>
        <Svg w={10} h={10}><circle cx="4" cy="4" r="3.200" stroke="#aaa" /><path d="M6.300 6.300L9.500 9.500" stroke="#aaa" strokeWidth="1.300" /></Svg>
        <input aria-label="Search swatches" className="min-w-0 flex-1 bg-transparent outline-none" />
      </div>
      <ContextMenu />
    </aside>
  );
}

function StatusBar() {
  return (
    <footer className="flex h-[17px] shrink-0 items-center bg-[#323232] pl-[9px] pt-[3px] text-[11px] text-[#b8b8b8] whitespace-nowrap">
      <button aria-label="First page"><Svg w={10} h={10}><path d="M.5 0v10" stroke="#777" /><path d="M10 0v10L2 5z" fill="#777" /></Svg></button>
      <button aria-label="Previous page" className="ml-[9px]"><Svg w={8} h={10}><path d="M8 0v10L0 5z" fill="#777" /></Svg></button>
      <span className="ml-[36px] w-[72px]">1 of 106</span>
      <button aria-label="Next page"><Svg w={8} h={10}><path d="M0 0v10l8-5z" fill="#eee" /></Svg></button>
      <button aria-label="Last page" className="ml-[9px]"><Svg w={10} h={10}><path d="M0 0v10l8-5z" fill="#eee" /><path d="M9.500 0v10" stroke="#eee" /></Svg></button>
      <button aria-label="Page list" className="ml-[9px]"><Svg w={12} h={13}><path d="M10 2h1.500v10.500H3V11" stroke="#999" /><path d="M.5.500h9v11h-9zM2 3h6M2 5h6M2 7h6M2 9h6" stroke="#eee" /></Svg></button>
      <button aria-label="Preflight" className="ml-[14px]"><Svg w={12} h={11}><path d="M2 10V4a4 4 0 0 1 8 0v6z" fill="#f0423c" /><path d="M0 10.500h12" stroke="#888" /></Svg></button>
      <p className="ml-[14px] font-[Roboto,sans-serif]"><b className="text-white">Click</b> or <b className="text-white">Drag</b> to select text. <Svg w={10} h={10} className="inline"><path d="M5 1L1 5h2v4h4V5h2z" stroke="#fff" strokeWidth="1.600" /></Svg> or <b className="text-white">⌘</b> to modify selection.</p>
    </footer>
  );
}

const arrows = [
  ["M691 168L860 214", "888,222 860,199 853,229"],
  ["M337 362L372 427", "384,451 385,417 356,432"],
  ["M413 618L608 378", "626,356 594,371 618,390"],
  ["M418 619L640 405", "658,386 625,397 649,419"],
  ["M424 620L640 436", "660,420 626,427 645,451"],
  ["M697 745L905 466", "921,443 890,459 916,478"],
];

function Annotations() {
  return (
    <svg className="pointer-events-none absolute left-0 top-0 h-[912px] w-[1138px]" viewBox="0 0 1138 912" fill="#ff2b1a" fontFamily="Liberation Sans, sans-serif" fontSize="44">
      {arrows.map(([d, p]) => (
        <g key={d}><path d={d} stroke="#ff2b1a" strokeWidth="6" /><polygon points={p} /></g>
      ))}
      <text x="668" y="183">1</text>
      <text x="665" y="746">2</text>
      <text x="381" y="628">3</text>
      <text x="312" y="370">4</text>
    </svg>
  );
}

export default function App() {
  return (
    <div className="relative flex h-screen flex-col overflow-hidden bg-[#323232] font-[Inter,sans-serif]">
      <TopBar />
      <ContextBar />
      <div className="flex min-h-0 flex-1">
        <Tools />
        <Workspace />
        <Panels />
      </div>
      <StatusBar />
      <Annotations />
    </div>
  );
}
